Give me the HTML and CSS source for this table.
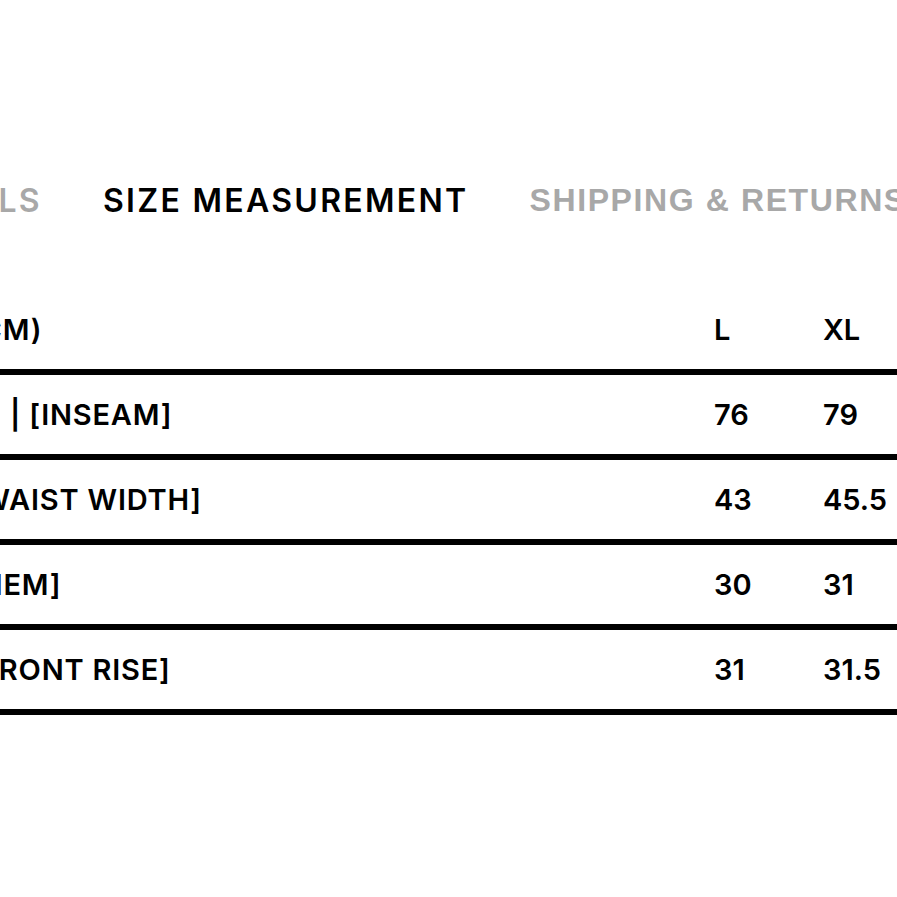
FILE: index.html
```html
<!DOCTYPE html>
<html lang="en">
<head>
<meta charset="utf-8">
<title>Size Measurement</title>
<link rel="stylesheet" href="styles.css">
</head>
<body>
<div class="page">
  <nav class="tabs">
    <span class="tab tab-muted">DETAILS</span>
    <span class="tab tab-active">SIZE MEASUREMENT</span>
    <span class="tab tab-muted tab-alt">SHIPPING &amp; RETURNS</span>
  </nav>
  <div class="table">
    <div class="row head">
      <span class="label">(CM)</span>
      <span class="val">L</span>
      <span class="val">XL</span>
    </div>
    <div class="row">
      <span class="label">[I] | [INSEAM]</span>
      <span class="val">76</span>
      <span class="val">79</span>
    </div>
    <div class="row">
      <span class="label">[WAIST WIDTH]</span>
      <span class="val">43</span>
      <span class="val">45.5</span>
    </div>
    <div class="row">
      <span class="label">[HEM]</span>
      <span class="val">30</span>
      <span class="val">31</span>
    </div>
    <div class="row">
      <span class="label">[FRONT RISE]</span>
      <span class="val">31</span>
      <span class="val">31.5</span>
    </div>
  </div>
</div>
</body>
</html>
```

FILE: styles.css
```css
html, body {
  margin: 0;
  padding: 0;
  background: #fff;
  overflow: hidden;
}
body {
  width: 897px;
  height: 897px;
  font-family: Inter, "Noto Sans", sans-serif;
  color: #000;
}
.page {
  padding-top: 176px;
  width: 897px;
  overflow: hidden;
}
.tabs {
  display: flex;
  gap: 61px;
  white-space: nowrap;
  margin-left: -106px;
  height: 48px;
  align-items: center;
}
.tab {
  font-size: 32px;
  font-weight: 600;
  letter-spacing: 2.3px;
  flex: none;
}
.tab-muted { color: #a8a8a8; }
.tab-alt {
  font-family: "Liberation Sans", Arial, sans-serif;
  font-weight: 700;
  letter-spacing: 1.6px;
}
.tab-active { color: #000; }
.table {
  margin-top: 66px;
  margin-left: -31px;
  width: 960px;
}
.row {
  display: grid;
  grid-template-columns: 745px 109px 1fr;
  align-items: center;
  height: 79px;
  border-bottom: 6px solid #000;
  font-size: 29px;
  font-weight: 600;
  white-space: nowrap;
}
.label {
  display: block;
  letter-spacing: 0.8px;
}
.val { display: block; }
```
